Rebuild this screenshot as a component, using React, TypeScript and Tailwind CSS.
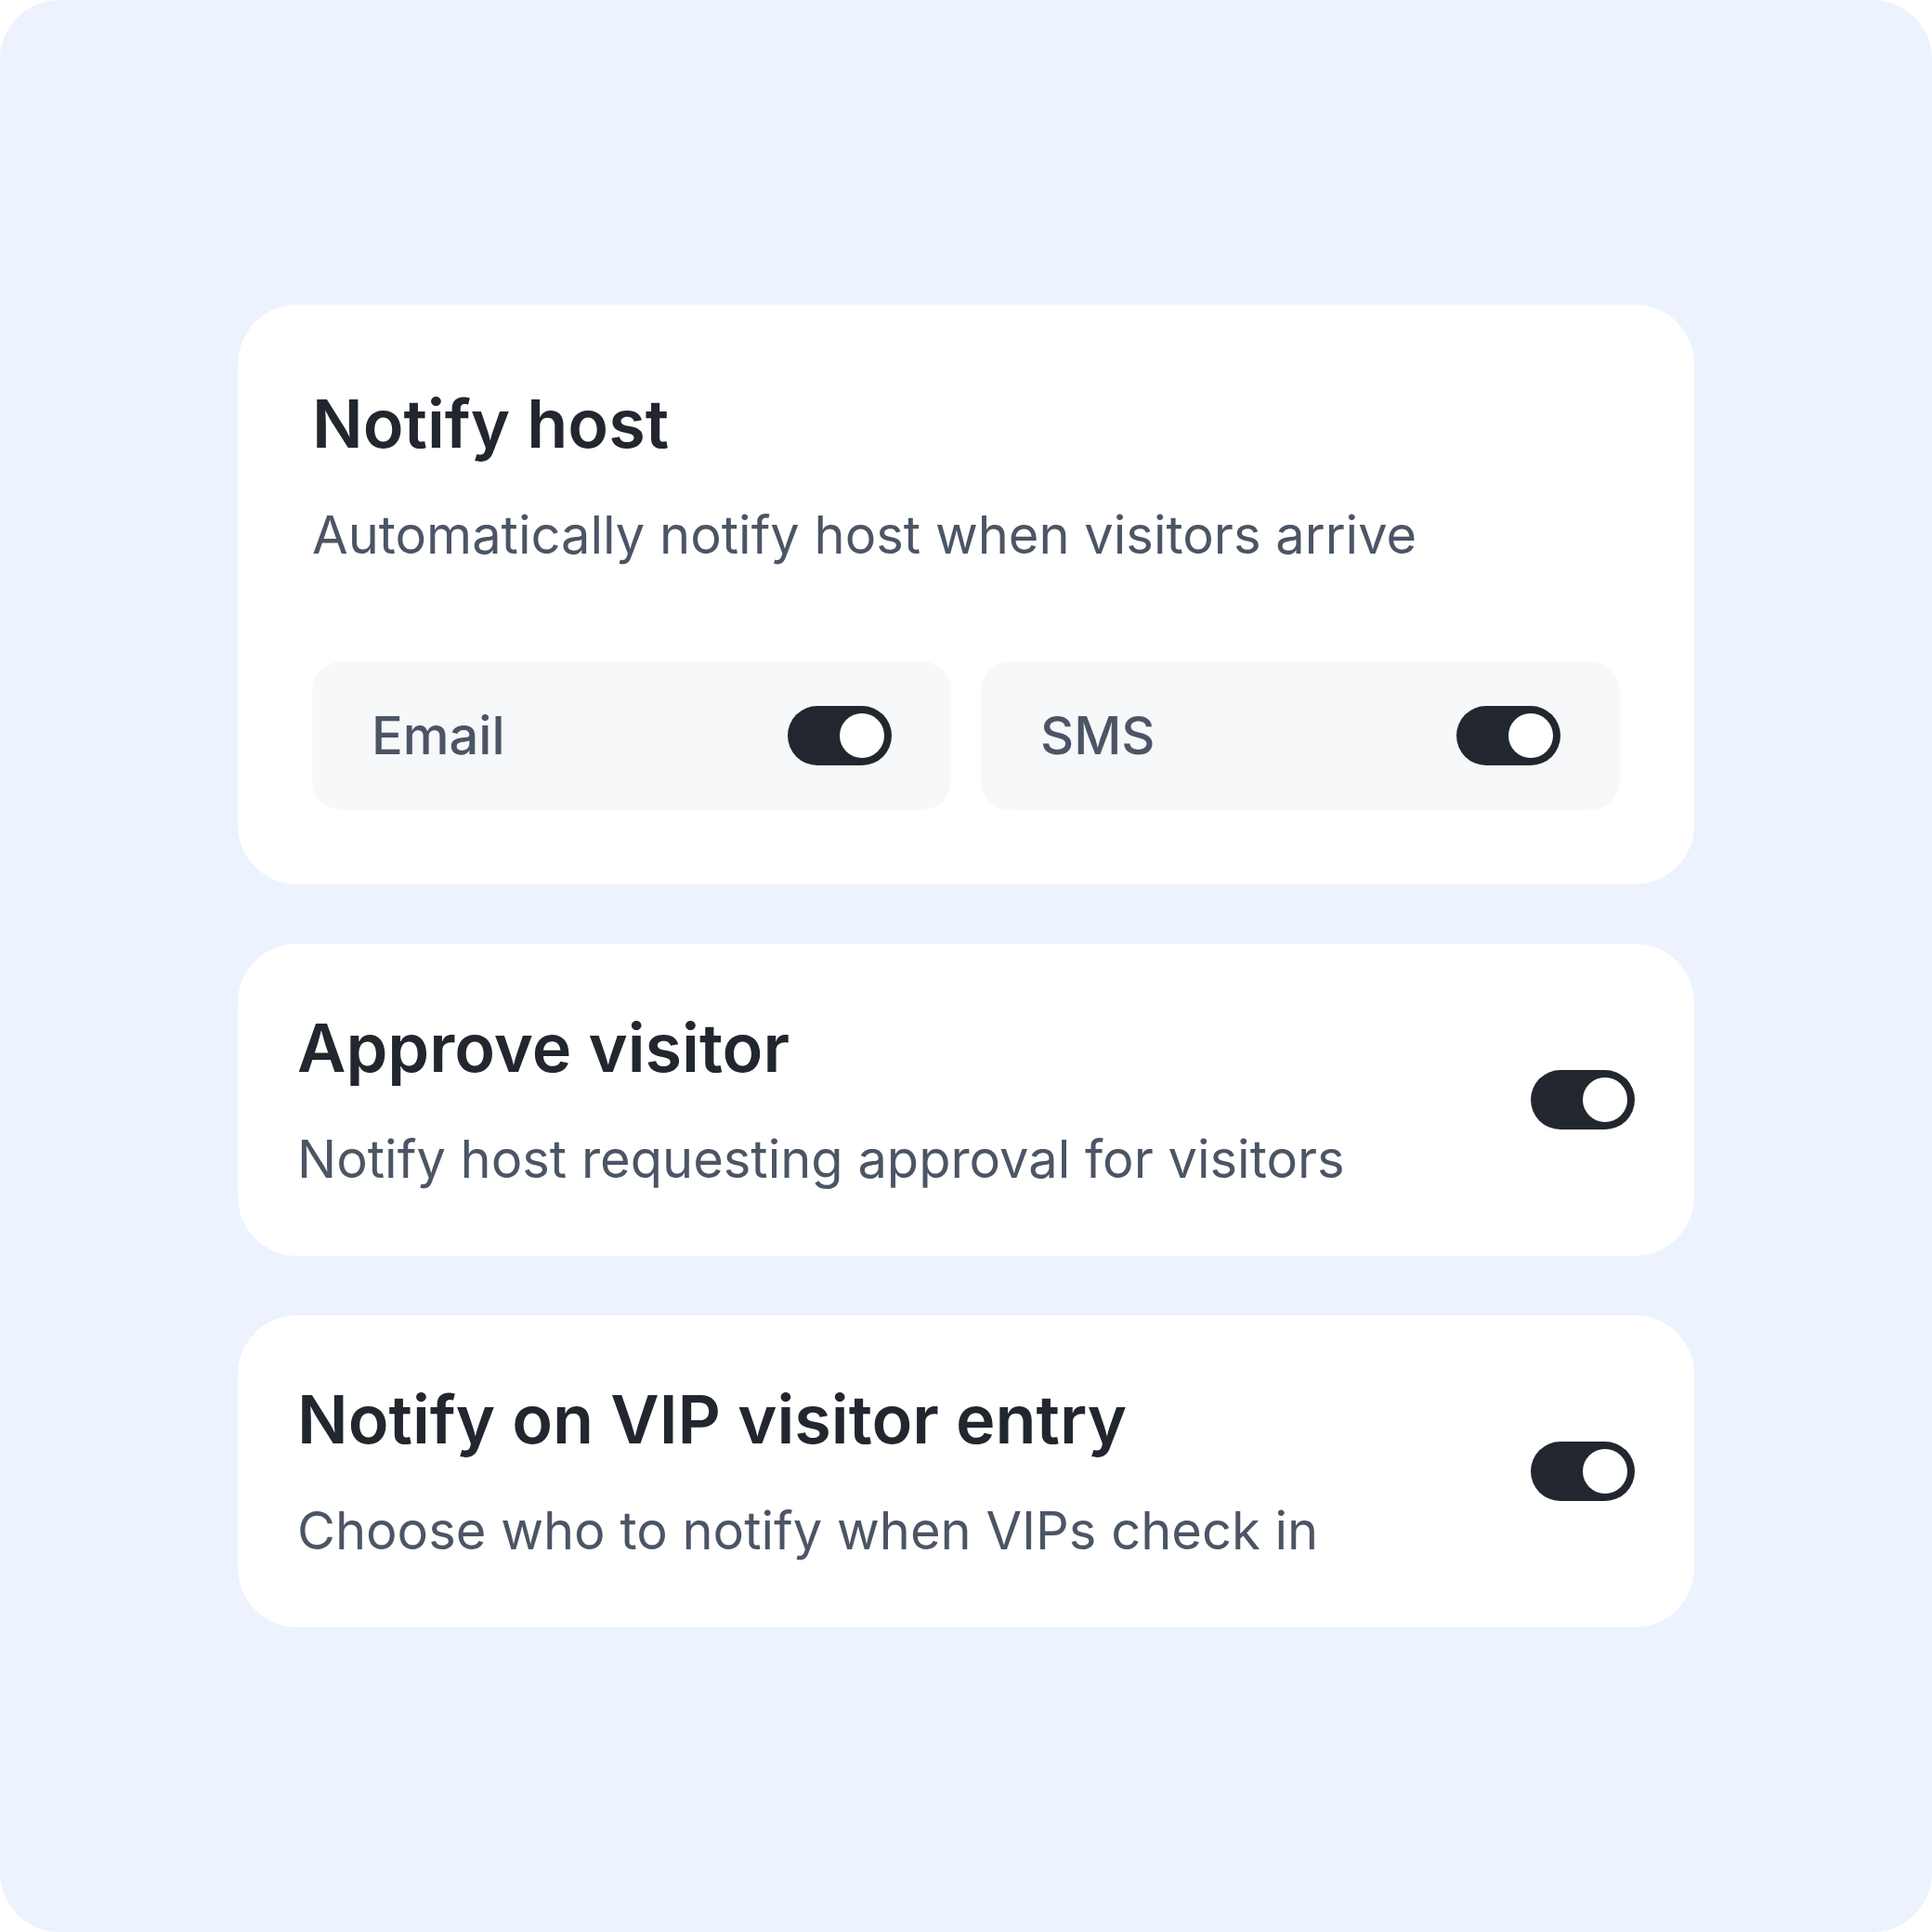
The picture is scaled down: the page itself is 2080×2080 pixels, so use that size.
import React from "react";

function Toggle() {
  return (
    <div className="flex h-16 w-28 shrink-0 items-center justify-end rounded-full bg-[#22272f] pr-2">
      <div className="h-12 w-12 rounded-full bg-white" />
    </div>
  );
}

function Channel({ label }: { label: string }) {
  return (
    <div className="flex h-40 flex-1 items-center justify-between rounded-[32px] bg-[#f6f8fa] px-16">
      <span className="text-[56px] font-medium leading-[80px] text-[#4b5565]">{label}</span>
      <Toggle />
    </div>
  );
}

export default function App() {
  return (
    <div
      className="flex h-[2080px] w-[2080px] flex-col items-center justify-center gap-16 rounded-[64px] bg-[#ecf3fe]"
      style={{ fontFamily: "Inter, 'Noto Sans', sans-serif" }}
    >
      <div className="flex w-[1568px] flex-col rounded-[64px] bg-white p-20">
        <h2 className="text-[72px] font-semibold leading-[96px] text-[#22262e]">Notify host</h2>
        <p className="mt-8 text-[56px] leading-[80px] text-[#4b5565]">
          Automatically notify host when visitors arrive
        </p>
        <div className="mt-24 flex gap-8">
          <Channel label="Email" />
          <Channel label="SMS" />
        </div>
      </div>

      <div className="flex w-[1568px] items-center justify-between rounded-[64px] bg-white p-16">
        <div className="flex flex-col gap-8">
          <h2 className="text-[72px] font-semibold leading-[96px] text-[#22262e]">Approve visitor</h2>
          <p className="text-[56px] leading-[80px] text-[#4b5565]">Notify host requesting approval for visitors</p>
        </div>
        <Toggle />
      </div>

      <div className="flex w-[1568px] items-center justify-between rounded-[64px] bg-white p-16">
        <div className="flex flex-col gap-8">
          <h2 className="text-[72px] font-semibold leading-[96px] text-[#22262e]">
            Notify on VIP visitor entry
          </h2>
          <p className="text-[56px] leading-[80px] text-[#4b5565]">Choose who to notify when VIPs check in</p>
        </div>
        <Toggle />
      </div>
    </div>
  );
}
